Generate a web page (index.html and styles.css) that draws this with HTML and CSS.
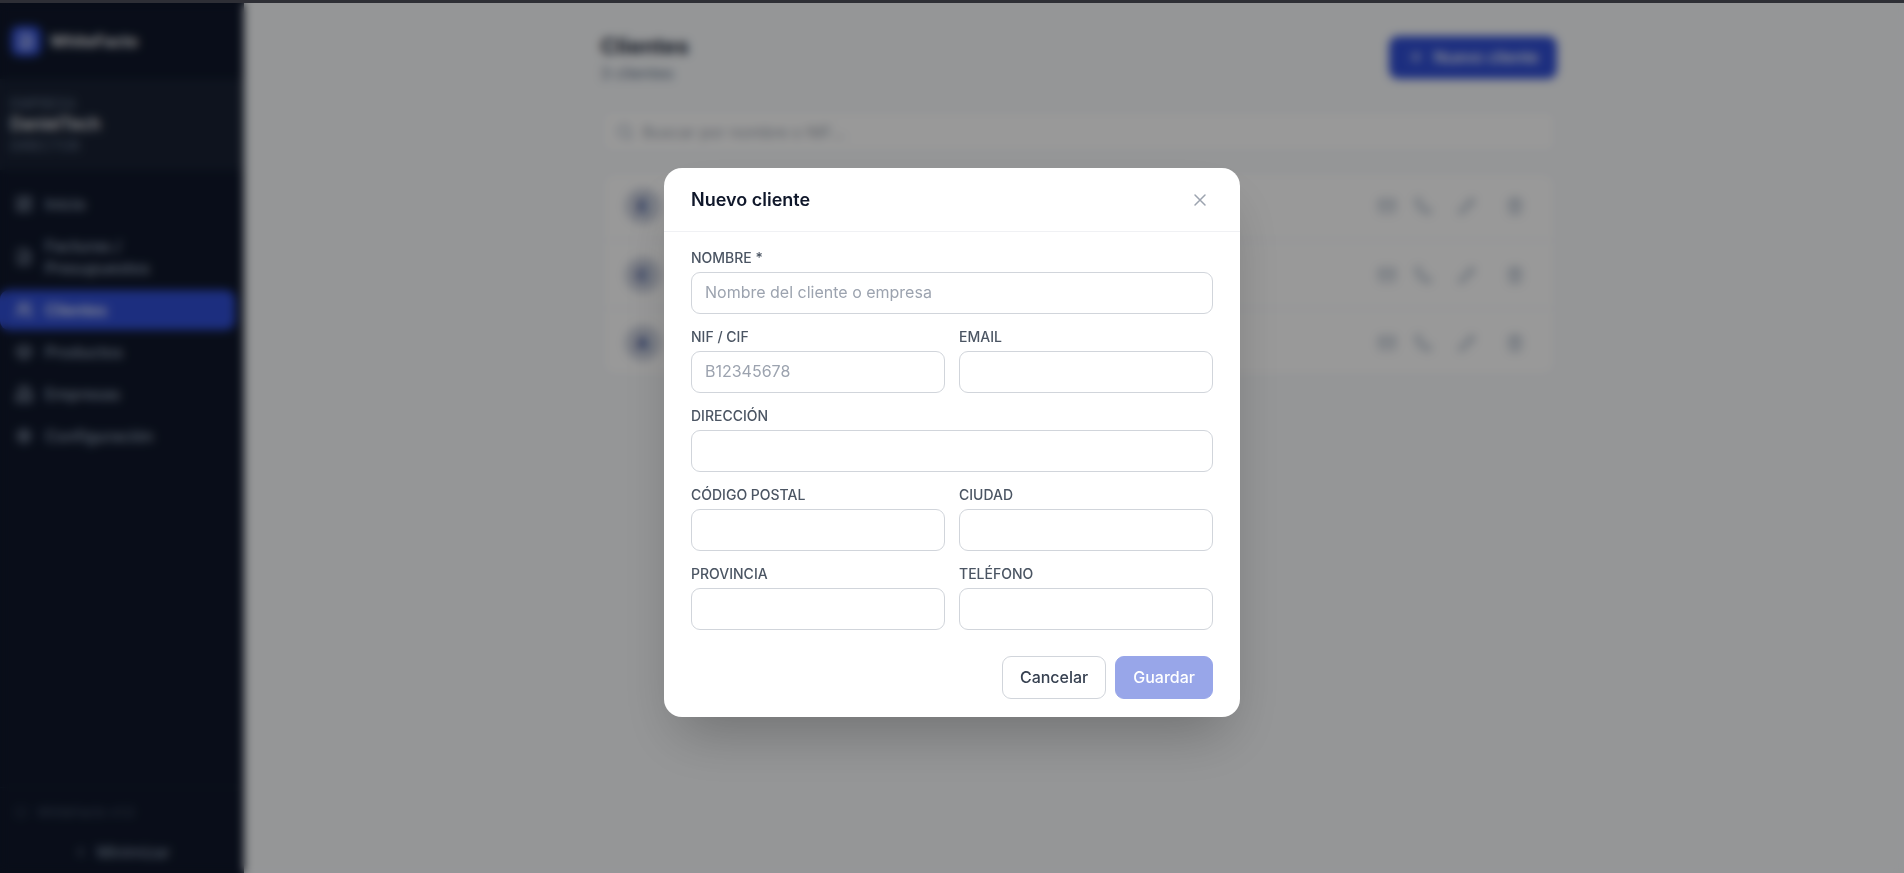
FILE: index.html
```html
<!DOCTYPE html>
<html lang="es">
  <head>
    <meta charset="UTF-8" />
    <meta name="viewport" content="width=device-width, initial-scale=1" />
    <title>Clientes</title>
    <link rel="stylesheet" href="styles.css">
  </head>

  <body>
    <!-- Iconos reutilizados -->
    <svg class="sprite" aria-hidden="true">
      <symbol id="i-file" viewBox="0 0 24 24"><path d="M14 2H6a2 2 0 0 0-2 2v16a2 2 0 0 0 2 2h12a2 2 0 0 0 2-2V8zM14 2v6h6M8 13h8M8 17h8" /></symbol>
      <symbol id="i-grid" viewBox="0 0 24 24"><path d="M3 3h7v9H3zM14 3h7v5h-7zM14 12h7v9h-7zM3 16h7v5H3z" /></symbol>
      <symbol id="i-users" viewBox="0 0 24 24"><path d="M16 21v-2a4 4 0 0 0-4-4H6a4 4 0 0 0-4 4v2M22 21v-2a4 4 0 0 0-3-4M16 3a4 4 0 0 1 0 8" /><circle cx="9" cy="7" r="4" /></symbol>
      <symbol id="i-box" viewBox="0 0 24 24"><path d="M21 8l-9-5-9 5v8l9 5 9-5zM3 8l9 5 9-5M12 13v8" /></symbol>
      <symbol id="i-building" viewBox="0 0 24 24"><path d="M6 22V4a2 2 0 0 1 2-2h8a2 2 0 0 1 2 2v18zM6 12H4a2 2 0 0 0-2 2v8h4M18 9h2a2 2 0 0 1 2 2v11h-4M10 6h4M10 10h4M10 14h4M10 18h4" /></symbol>
      <symbol id="i-gear" viewBox="0 0 24 24"><circle cx="12" cy="12" r="3" /><circle cx="12" cy="12" r="7" /><path d="M12 2v3M12 19v3M2 12h3M19 12h3M5 5l2 2M17 17l2 2M5 19l2-2M17 7l2-2" /></symbol>
      <symbol id="i-mail" viewBox="0 0 24 24"><rect x="2" y="4" width="20" height="16" rx="2" /><path d="M22 7l-10 6L2 7" /></symbol>
      <symbol id="i-phone" viewBox="0 0 24 24"><path d="M22 17v3a2 2 0 0 1-2 2A20 20 0 0 1 2 4a2 2 0 0 1 2-2h3a2 2 0 0 1 2 2c0 1 .3 2 .7 3a2 2 0 0 1-.5 2L8 10a16 16 0 0 0 6 6l1-1a2 2 0 0 1 2-.5c1 .4 2 .6 3 .7a2 2 0 0 1 2 2z" /></symbol>
      <symbol id="i-pencil" viewBox="0 0 24 24"><path d="M17 3a3 3 0 0 1 4 4L7 21l-5 1 1-5zM15 5l4 4" /></symbol>
      <symbol id="i-trash" viewBox="0 0 24 24"><path d="M3 6h18M19 6v14a2 2 0 0 1-2 2H7a2 2 0 0 1-2-2V6M8 6V4a2 2 0 0 1 2-2h4a2 2 0 0 1 2 2v2M10 11v6M14 11v6" /></symbol>
    </svg>

    <div class="topline"></div>

    <div class="app">
      <aside class="sidebar">
        <div class="brand">
          <span class="brand-logo"><svg class="icon"><use href="#i-file" /></svg></span>
          <span>WhiteFacto</span>
        </div>

        <div class="company">
          <span>EMPRESA</span>
          <strong>DanielTech</strong>
          <span>DIRECTOR</span>
        </div>

        <nav class="nav">
          <a href="#"><svg class="icon"><use href="#i-grid" /></svg>Inicio</a>
          <a href="#"><svg class="icon"><use href="#i-file" /></svg>Facturas / Presupuestos</a>
          <a href="#" class="active"><svg class="icon"><use href="#i-users" /></svg>Clientes</a>
          <a href="#"><svg class="icon"><use href="#i-box" /></svg>Productos</a>
          <a href="#"><svg class="icon"><use href="#i-building" /></svg>Empresas</a>
          <a href="#"><svg class="icon"><use href="#i-gear" /></svg>Configuración</a>
        </nav>

        <div class="sidebar-foot">
          <p class="version"><svg class="icon" viewBox="0 0 24 24"><circle cx="12" cy="12" r="9" /></svg>WhiteFacto v1.0</p>
          <button type="button" class="collapse"><svg class="icon" viewBox="0 0 24 24"><path d="M15 5l-7 7 7 7" /></svg>Minimizar</button>
        </div>
      </aside>

      <main class="main">
        <div class="content">
          <header class="page-head">
            <div>
              <h1>Clientes</h1>
              <p>3 clientes</p>
            </div>
            <button type="button" class="btn-new"><svg class="icon" viewBox="0 0 24 24"><path d="M12 5v14M5 12h14" /></svg>Nuevo cliente</button>
          </header>

          <label class="search">
            <svg class="icon" viewBox="0 0 24 24"><circle cx="11" cy="11" r="8" /><path d="M21 21l-4-4" /></svg>
            <input type="search" placeholder="Buscar por nombre o NIF..." aria-label="Buscar" />
          </label>

          <ul class="clients">
            <li>
              <span class="avatar">E</span>
              <div class="actions">
                <svg class="icon"><use href="#i-mail" /></svg>
                <svg class="icon"><use href="#i-phone" /></svg>
                <button type="button" aria-label="Editar"><svg class="icon"><use href="#i-pencil" /></svg></button>
                <button type="button" aria-label="Eliminar"><svg class="icon"><use href="#i-trash" /></svg></button>
              </div>
            </li>
            <li>
              <span class="avatar">C</span>
              <div class="actions">
                <svg class="icon"><use href="#i-mail" /></svg>
                <svg class="icon"><use href="#i-phone" /></svg>
                <button type="button" aria-label="Editar"><svg class="icon"><use href="#i-pencil" /></svg></button>
                <button type="button" aria-label="Eliminar"><svg class="icon"><use href="#i-trash" /></svg></button>
              </div>
            </li>
            <li>
              <span class="avatar">A</span>
              <div class="actions">
                <svg class="icon"><use href="#i-mail" /></svg>
                <svg class="icon"><use href="#i-phone" /></svg>
                <button type="button" aria-label="Editar"><svg class="icon"><use href="#i-pencil" /></svg></button>
                <button type="button" aria-label="Eliminar"><svg class="icon"><use href="#i-trash" /></svg></button>
              </div>
            </li>
          </ul>
        </div>
      </main>
    </div>

    <!-- Ventana modal -->
    <div class="overlay">
      <form class="modal" role="dialog" aria-labelledby="modal-title">
        <div class="modal-head">
          <h2 id="modal-title">Nuevo cliente</h2>
          <button type="button" class="close" aria-label="Cerrar">
            <svg class="icon" viewBox="0 0 18 18"><path d="M4 4l10 10M14 4L4 14" /></svg>
          </button>
        </div>

        <div class="fields">
          <div class="field wide">
            <label for="nombre">NOMBRE *</label>
            <input id="nombre" type="text" placeholder="Nombre del cliente o empresa" />
          </div>
          <div class="field">
            <label for="nif">NIF / CIF</label>
            <input id="nif" type="text" placeholder="B12345678" />
          </div>
          <div class="field">
            <label for="email">EMAIL</label>
            <input id="email" type="email" />
          </div>
          <div class="field wide">
            <label for="direccion">DIRECCIÓN</label>
            <input id="direccion" type="text" />
          </div>
          <div class="field">
            <label for="cp">CÓDIGO POSTAL</label>
            <input id="cp" type="text" />
          </div>
          <div class="field">
            <label for="ciudad">CIUDAD</label>
            <input id="ciudad" type="text" />
          </div>
          <div class="field">
            <label for="provincia">PROVINCIA</label>
            <input id="provincia" type="text" />
          </div>
          <div class="field">
            <label for="telefono">TELÉFONO</label>
            <input id="telefono" type="tel" />
          </div>
        </div>

        <div class="modal-foot">
          <button type="button" class="btn">Cancelar</button>
          <button type="submit" class="btn btn-primary" disabled>Guardar</button>
        </div>
      </form>
    </div>
  </body>
</html>
```

FILE: styles.css
```css
* {
  box-sizing: border-box;
}

body {
  margin: 0;
  background: #f8fafc;
  color: #0f172a;
  font-family: Inter, "Liberation Sans", sans-serif;
  font-size: 16px;
  line-height: 22px;
}

h1,
h2,
p,
ul {
  margin: 0;
  padding: 0;
}

button,
input {
  font: inherit;
}

button {
  padding: 0;
  border: 0;
  background: none;
  color: inherit;
}

a {
  color: inherit;
  text-decoration: none;
}

.sprite {
  display: none;
}

.icon {
  width: 18px;
  height: 18px;
  flex: none;
  display: block;
  fill: none;
  stroke: currentColor;
  stroke-width: 2;
  stroke-linecap: round;
  stroke-linejoin: round;
}

.topline {
  height: 3px;
  background: #2e2f36;
}

.app {
  display: flex;
  min-height: calc(100vh - 3px);
}

/* Barra lateral */
.sidebar {
  width: 244px;
  flex: none;
  display: flex;
  flex-direction: column;
  background: #0f172a;
  color: #94a3b8;
}

.brand {
  height: 76px;
  padding: 0 11px;
  display: flex;
  align-items: center;
  gap: 9px;
  color: #fff;
  font-weight: 600;
}

.brand-logo {
  width: 30px;
  height: 30px;
  display: grid;
  place-items: center;
  border-radius: 8px;
  background: #304ed4;
}

.company {
  display: flex;
  flex-direction: column;
  padding: 14px 10px;
  background: #182133;
  font-size: 14px;
  line-height: 21px;
}

.company span {
  color: #64748b;
}

.company strong {
  color: #fff;
  font-size: 17px;
  font-weight: 500;
}

.nav {
  display: flex;
  flex-direction: column;
  gap: 2px;
  padding: 14px 9px 14px 0;
}

.nav a {
  display: flex;
  align-items: center;
  gap: 12px;
  padding: 9px 15px;
  border-radius: 9px;
  font-weight: 500;
}

.nav .active {
  background: #304ed4;
  color: #fff;
}

.sidebar-foot {
  margin-top: auto;
  border-top: 1px solid #172033;
  padding: 13px 0 6px;
}

.version {
  display: flex;
  align-items: center;
  gap: 9px;
  padding: 0 14px;
  color: #475569;
  font-size: 13px;
}

.version .icon {
  width: 14px;
  height: 14px;
}

.collapse {
  width: 100%;
  display: flex;
  align-items: center;
  justify-content: center;
  gap: 9px;
  margin-top: 14px;
  padding: 4px 0;
}

.collapse .icon {
  width: 14px;
  height: 14px;
}

/* Contenido */
.main {
  flex: 1;
  padding: 27px 27px 27px 36px;
}

.content {
  max-width: 956px;
  margin: 0 auto;
}

.page-head {
  display: flex;
  justify-content: space-between;
  align-items: center;
  margin-bottom: 26px;
}

h1 {
  font-size: 22px;
  line-height: 32px;
  font-weight: 700;
  color: #1e293b;
}

.page-head p {
  color: #64748b;
}

.btn-new {
  display: flex;
  align-items: center;
  gap: 9px;
  height: 43px;
  padding: 0 18px;
  border-radius: 9px;
  background: #304ed4;
  color: #fff;
  font-weight: 500;
}

.search {
  display: flex;
  align-items: center;
  gap: 9px;
  height: 43px;
  padding: 0 14px;
  margin-bottom: 18px;
  border: 1px solid #e2e8f0;
  border-radius: 9px;
  background: #fff;
  color: #94a3b8;
}

.search input {
  flex: 1;
  border: 0;
  padding: 0;
  background: none;
}

.clients {
  list-style: none;
  border: 1px solid #e2e8f0;
  border-radius: 14px;
  background: #fff;
}

.clients li {
  display: flex;
  align-items: center;
  justify-content: space-between;
  height: 68px;
  padding: 0 28px 0 23px;
}

.clients li + li {
  border-top: 1px solid #f1f5f9;
}

.avatar {
  width: 36px;
  height: 36px;
  display: grid;
  place-items: center;
  border-radius: 50%;
  background: #ccd1de;
  color: #1e3a8a;
  font-weight: 700;
}

.actions {
  display: flex;
  align-items: center;
  gap: 18px;
  color: #94a3b8;
}

.actions button {
  padding: 0 4px;
  margin-left: 4px;
}

/* Modal */
.overlay {
  position: fixed;
  inset: 3px 0 0;
  display: flex;
  align-items: center;
  justify-content: center;
  padding: 24px 16px 15px;
  background: rgba(0, 0, 0, 0.4);
  backdrop-filter: blur(5px);
}

.modal {
  width: 100%;
  max-width: 576px;
  border-radius: 18px;
  background: #fff;
  box-shadow: 0 28px 56px -14px rgba(0, 0, 0, 0.25);
}

.modal-head {
  display: flex;
  align-items: center;
  justify-content: space-between;
  height: 64px;
  padding: 0 27px;
  border-bottom: 1px solid #f0f1f4;
}

h2 {
  font-size: 18px;
  line-height: 28px;
  font-weight: 600;
}

.close {
  padding: 4px;
  color: #9ca3af;
}

.close .icon {
  stroke-width: 1.5;
}

.fields {
  display: grid;
  grid-template-columns: 1fr 1fr;
  gap: 14px;
  padding: 17px 27px 26px;
}

.wide {
  grid-column: 1 / -1;
}

.field {
  display: flex;
  flex-direction: column;
  gap: 5px;
}

.field label {
  color: #4b5563;
  font-size: 14px;
  line-height: 18px;
  font-weight: 500;
}

.field input {
  width: 100%;
  height: 42px;
  padding: 0 13px 2px;
  border: 1px solid #d1d5db;
  border-radius: 9px;
  background: #fff;
}

input::placeholder {
  color: #9ca3af;
}

.modal-foot {
  display: flex;
  justify-content: flex-end;
  gap: 9px;
  padding: 0 27px 18px;
}

.btn {
  height: 43px;
  padding: 0 17px 2px;
  border: 1px solid #d1d5db;
  border-radius: 9px;
  color: #374151;
  font-weight: 500;
}

.btn-primary {
  border-color: #98a6e9;
  background: #98a6e9;
  color: #fff;
}
```
